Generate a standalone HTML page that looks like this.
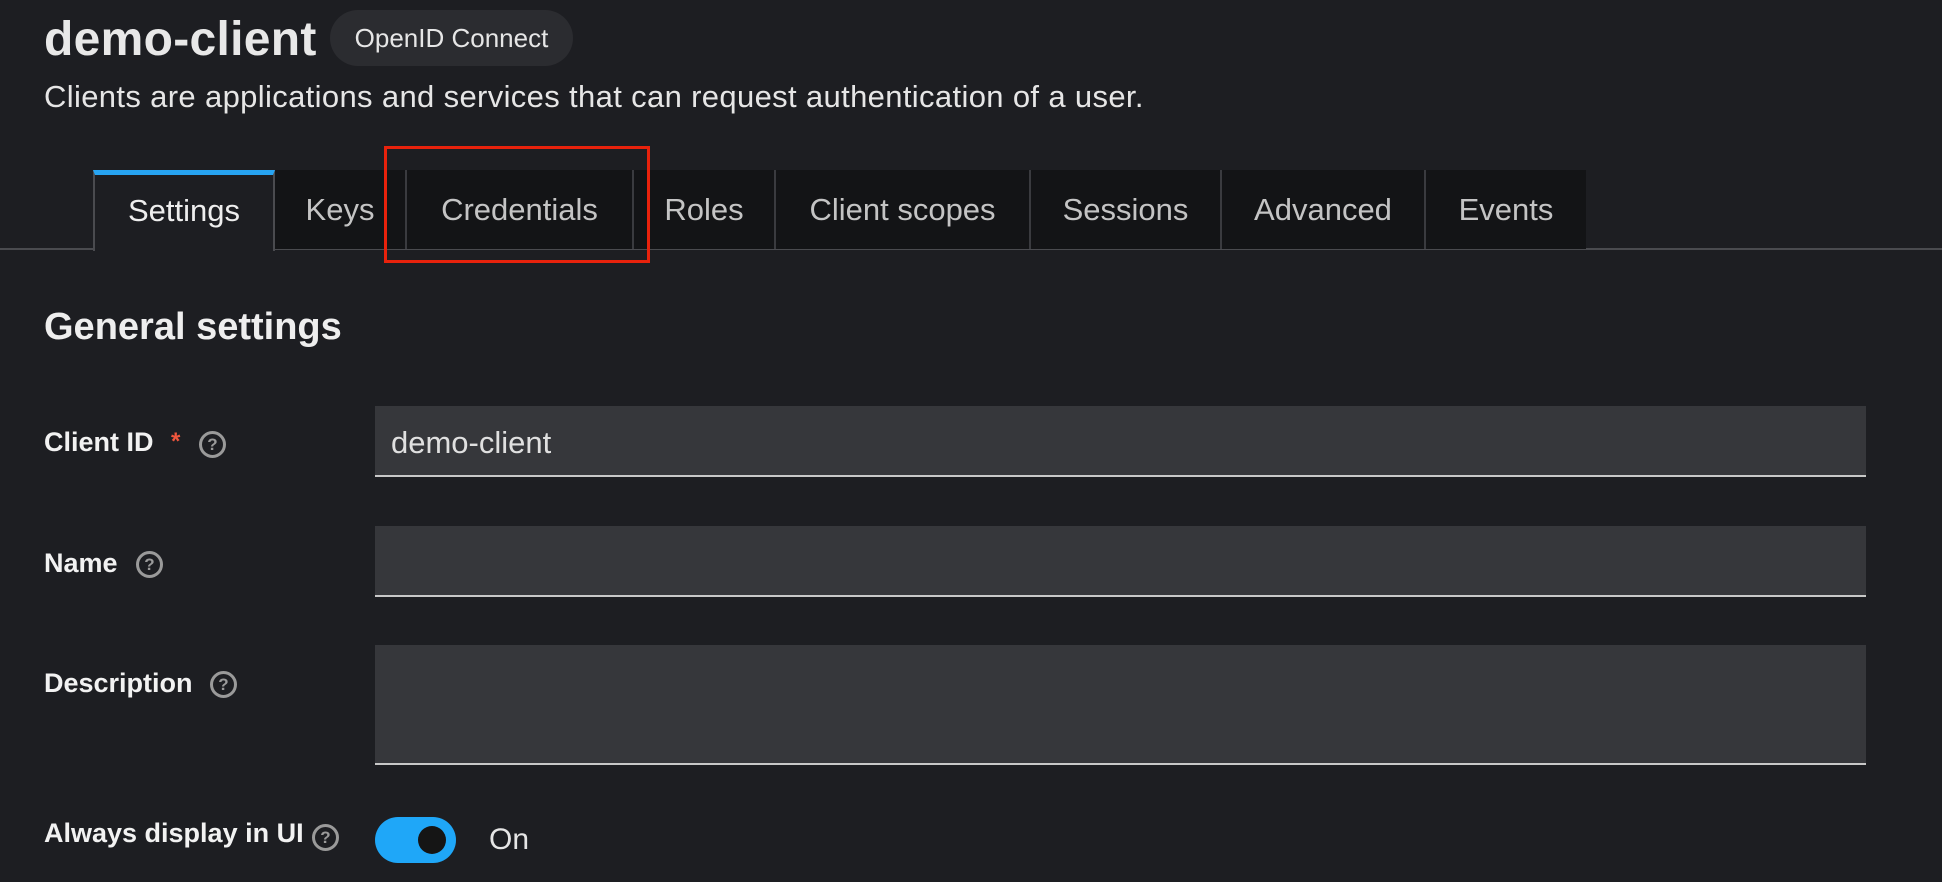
<!DOCTYPE html>
<html><head><meta charset="utf-8"><style>
*{margin:0;padding:0;box-sizing:border-box}
body{width:1942px;height:882px;background:#1d1e22;font-family:"Liberation Sans",sans-serif;color:#e6e6e6;position:relative;overflow:hidden}
.a{position:absolute;white-space:nowrap}
.tab{position:absolute;top:170px;height:79px;background:#131416;color:#c4c4c4;font-size:31px;line-height:79px;text-align:center;border-left:2px solid #3a3b3f}
.lbl{font-weight:bold;font-size:27px;color:#f2f2f2}
.help{position:absolute;width:27px;height:27px;border:3px solid #9a9a9a;border-radius:50%;color:#9a9a9a;font-size:17px;font-weight:bold;text-align:center;line-height:21px}
.inp{position:absolute;left:375px;width:1491px;background:#36373b;border-bottom:2px solid #c8c8c8}
</style></head><body>
<div class="a" style="left:44px;top:12px;font-size:48px;font-weight:bold;color:#e8e8e8;letter-spacing:0.3px">demo-client</div>
<div class="a" style="left:330px;top:10px;width:243px;height:56px;border-radius:28px;background:#2b2c30;font-size:26px;line-height:56px;text-align:center;color:#e6e6e6">OpenID Connect</div>
<div class="a" style="left:44px;top:79px;font-size:31px;letter-spacing:0.35px;color:#e6e6e6">Clients are applications and services that can request authentication of a user.</div>

<div class="a" style="left:0;top:248px;width:1942px;height:2px;background:#4a4b4f"></div>
<div class="tab" style="left:93px;width:182px;background:#1d1e22;color:#eee;height:81px;border-right:2px solid #4a4b4f;border-left:2px solid #4a4b4f;border-top:5px solid #27a4f2;line-height:72px">Settings</div>
<div class="tab" style="left:275px;width:130px;border-left:none">Keys</div>
<div class="tab" style="left:405px;width:227px">Credentials</div>
<div class="tab" style="left:632px;width:142px">Roles</div>
<div class="tab" style="left:774px;width:255px">Client scopes</div>
<div class="tab" style="left:1029px;width:191px">Sessions</div>
<div class="tab" style="left:1220px;width:204px">Advanced</div>
<div class="tab" style="left:1424px;width:162px">Events</div>
<div class="a" style="left:384px;top:146px;width:266px;height:117px;border:3px solid #e8220c"></div>

<div class="a" style="left:44px;top:306px;font-size:38px;font-weight:bold;color:#eee">General settings</div>

<div class="a lbl" style="left:44px;top:427px">Client ID</div>
<div class="a" style="left:171px;top:428px;color:#f0563d;font-size:24px;font-weight:bold">*</div>
<div class="help" style="left:199px;top:431px">?</div>
<div class="inp" style="top:406px;height:71px"><span class="a" style="left:16px;top:19px;font-size:31px;color:#e0e0e0">demo-client</span></div>

<div class="a lbl" style="left:44px;top:548px">Name</div>
<div class="help" style="left:136px;top:551px">?</div>
<div class="inp" style="top:526px;height:71px"></div>

<div class="a lbl" style="left:44px;top:668px">Description</div>
<div class="help" style="left:210px;top:671px">?</div>
<div class="inp" style="top:645px;height:120px"></div>

<div class="a lbl" style="left:44px;top:818px">Always display in UI</div>
<div class="help" style="left:312px;top:824px">?</div>
<div class="a" style="left:375px;top:817px;width:81px;height:46px;border-radius:23px;background:#1fa7f8"></div>
<div class="a" style="left:418px;top:826px;width:28px;height:28px;border-radius:50%;background:#151515"></div>
<div class="a" style="left:489px;top:823px;font-size:30px;color:#e6e6e6">On</div>
</body></html>
